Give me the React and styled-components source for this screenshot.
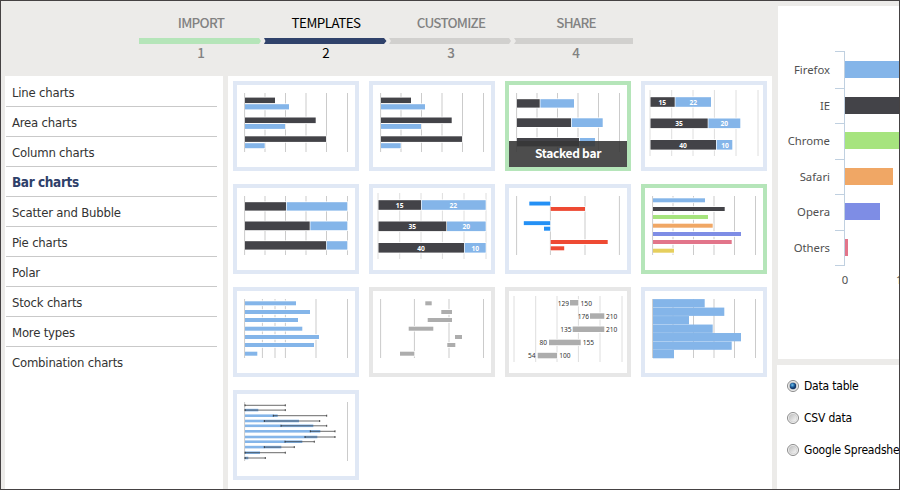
import React from "react";
import styled, { createGlobalStyle } from "styled-components";

const GlobalStyle = createGlobalStyle`
  * { box-sizing: border-box; }
  html, body { margin: 0; padding: 0; overflow: hidden; }
  body { background: #ecebe9; }
`;

const DARK = "#434348";
const BLUE = "#84b5e9";
const GRAY = "#adadad";
const AZURE = "#2490f5";
const RED = "#ee4a33";

const Page = styled.div`
  width: 900px;
  height: 490px;
  display: flex;
  border: 1px solid #454243;
  background: #ecebe9;
  overflow: hidden;
  font-family: "DejaVu Sans Condensed", "DejaVu Sans", sans-serif;
`;

const Main = styled.main`
  width: 771px;
  flex: none;
  display: flex;
  flex-direction: column;
`;

const Steps = styled.header`
  height: 75px;
  flex: none;
  display: flex;
  padding: 12px 0 0 138px;
  font-family: "Noto Sans CJK SC", "Noto Sans", sans-serif;
`;

const Step = styled.div`
  width: 125px;
  display: flex;
  flex-direction: column;
  color: ${(p) => (p.$active ? "#000" : "#828282")};
  font-size: 13.4px;
  font-weight: ${(p) => (p.$active ? 400 : 500)};
  line-height: 18px;
`;

const StepLabel = styled.div`
  height: 25px;
  padding-right: 1px;
  text-align: center;
  letter-spacing: ${(p) => (p.$active ? -0.55 : -0.75)}px;
`;

const StepNumber = styled.div`
  padding-right: 1px;
  margin-top: -1px;
  text-align: center;
`;

const StepBar = styled.svg`
  display: block;
  width: 125px;
  height: 6px;
`;

const Columns = styled.div`
  flex: 1;
  display: flex;
  gap: 5px;
  padding-left: 4px;
`;

const Sidebar = styled.nav`
  width: 218px;
  flex: none;
  background: #fff;
  padding: 1px 6px 0 1px;
`;

const Category = styled.div`
  height: 30px;
  padding-left: 6px;
  border-bottom: 1px solid ${(p) => (p.$last ? "transparent" : "#c9c9c9")};
  font-size: ${(p) => (p.$active ? 13.5 : 13)}px;
  line-height: 31px;
  letter-spacing: ${(p) => (p.$active ? -0.4 : -0.2)}px;
  font-weight: ${(p) => (p.$active ? 700 : 400)};
  color: ${(p) => (p.$active ? "#2f4069" : "#333")};
  white-space: nowrap;
`;

const Gallery = styled.section`
  width: 544px;
  flex: none;
  background: #fff;
  display: grid;
  grid-template-columns: repeat(4, 126px);
  grid-auto-rows: 90px;
  gap: 13px 10px;
  padding: 5px;
  align-content: start;
`;

const frames = { blue: "#e0e8f5", green: "#b5e5b9", gray: "#e7e7e7" };

const Card = styled.div`
  position: relative;
  border: 4px solid ${(p) => frames[p.$frame]};
  background: #fff;
`;

const Drawing = styled.svg`
  display: block;
  width: 118px;
  height: 82px;
`;

const Caption = styled.div`
  position: absolute;
  left: 0;
  right: 0;
  bottom: 0;
  height: 26px;
  background: rgba(55, 55, 55, 0.89);
  color: #fff;
  text-align: center;
  font: 700 12px/23px "Noto Sans CJK SC", "Noto Sans", sans-serif;
  letter-spacing: -0.3px;
`;

const Side = styled.aside`
  flex: none;
  width: 127px;
  padding-left: 5px;
  display: flex;
  flex-direction: column;
`;

const ChartPanel = styled.section`
  height: 353px;
  margin: 5px 0 6px 1px;
  background: #fff;
`;

const FormPanel = styled.section`
  flex: 1;
  display: flex;
  flex-direction: column;
  background: #fff;
  padding: 5px 0 0 9px;
`;

const Option = styled.label`
  height: 32px;
  display: flex;
  align-items: center;
  gap: 4px;
  font-size: 12px;
  letter-spacing: -0.2px;
  color: #000;
  white-space: nowrap;
`;

const RadioIcon = styled.svg`
  flex: none;
  width: 14px;
  height: 14px;
`;

const OptionText = styled.span`
  line-height: 20px;
`;

const GRID = [11.6, 32, 52.5, 73, 93.5, 114.5];
const WIDE = [9, 30.7, 52, 73.4, 95, 117];
const stack = (y, h, a, b, x = 12) => [[x, y, a - x, h, DARK], [a + 0.7, y, b - a - 0.7, h, BLUE]];
const ROWS = [14.3, 23, 31, 39.7, 48, 56, 64.7];
const fromAxis = (ends, colors) => ends.map((e, i) => [12, ROWS[i], e - 12, 4, colors[i] || colors[0]]);

const grouped = [
  [12, 16.6, 30, 5.6, DARK], [12, 23.2, 44, 5.2, BLUE],
  [12, 36.5, 70.7, 5.6, DARK], [12, 43, 40, 4.9, BLUE],
  [12, 55.3, 81, 5.6, DARK], [12, 62.2, 19.7, 5, BLUE],
];

const errorBars = [
  [15.3, 12, 12, 52.3], [20.1, 25.3, 12, 52.3], [25.7, 44.7, 40.3, 93.7],
  [31, 66, 31.3, 86.7], [35.8, 80.3, 48, 93.7], [41.3, 87.3, 77.3, 102],
  [47, 84.3, 72, 102], [51.7, 69.3, 52, 81.3], [57.1, 48.3, 31.3, 61.3],
  [62.7, 27, 12, 52.3], [68, 15.3, 12, 32.3],
];

const charts = [
  { frame: "blue", grid: GRID, bars: grouped },
  { frame: "blue", grid: GRID, bars: grouped },
  {
    frame: "green", grid: GRID, caption: "Stacked bar",
    bars: [...stack(18.2, 8.4, 34.7, 69), ...stack(37.3, 8.7, 66, 97.7), ...stack(57, 8.4, 74, 90)],
  },
  {
    frame: "blue", grid: WIDE, tall: true,
    bars: [...stack(16.2, 9.6, 33.7, 70, 9.5), ...stack(37.5, 9.6, 66.7, 99.3, 9.5), ...stack(59, 9.6, 75, 91.3, 9.5)],
    labels: [[21.3, 23.8, 15], [52.3, 23.8, 22], [38, 45, 35], [83.3, 45, 20], [42, 66.7, 40], [84, 66.7, 10]],
  },
  {
    frame: "blue", grid: GRID,
    bars: [...stack(18.2, 8.4, 53, 114.3), ...stack(37.5, 8.7, 76.7, 114.3), ...stack(57.2, 8.4, 93, 114.3)],
  },
  {
    frame: "blue", grid: WIDE, tall: true,
    bars: [...stack(16.2, 9.6, 52, 116.7, 9.5), ...stack(37.5, 9.6, 77.3, 116.7, 9.5), ...stack(59, 9.6, 95, 116.7, 9.5)],
    labels: [[30.7, 23.8, 15], [84.3, 23.8, 22], [43.3, 45, 35], [97.3, 45, 20], [52, 66.7, 40], [106.3, 66.7, 10]],
  },
  {
    frame: "blue", grid: [11.6, 45.4, 80, 114.4],
    bars: [
      [24.3, 17.6, 21, 3.9, AZURE], [45.7, 23, 34.3, 3.9, RED],
      [18.8, 37.2, 26.4, 3.9, AZURE], [39, 42.7, 6.2, 4, AZURE],
      [45.7, 56, 57, 4, RED], [45.7, 62.3, 13.5, 4, RED],
    ],
  },
  {
    frame: "green", grid: GRID,
    bars: fromAxis([64, 83.7, 67, 71.7, 100, 90.7, 33], [BLUE, DARK, "#a6e47e", "#f0a765", "#7e8de5", "#e2758a", "#e6cf5e"]),
  },
  {
    frame: "blue", grid: [11.6, 29.4, 42, 52.4, 83, 114.5],
    bars: fromAxis([63, 77, 65, 69.3, 86, 81, 24.3], [BLUE]),
  },
  {
    frame: "gray", grid: [11.6, 45.4, 80, 114.5],
    bars: [[56.3, 62.7], [72.3, 83], [58.7, 83], [39.7, 64.3], [86, 93], [78.3, 86.3], [31, 45.3]]
      .map(([a, b], i) => [a, ROWS[i], b - a, 4, GRAY]),
  },
  {
    frame: "gray", grid: WIDE, tall: true,
    bars: [[65, 13, 8.3], [85, 26.3, 14.3], [67.7, 39.5, 31.6], [44, 52.7, 31.7], [32.7, 65.8, 19.3]]
      .map(([x, y, w]) => [x, y, w, 5.5, GRAY]),
    notes: [
      [64, 19, 129, "end"], [75.6, 19, 150], [84, 32, 176, "end"], [101, 32, 210],
      [66.5, 45.2, 135, "end"], [101, 45.2, 210], [42, 58.3, 80, "end"], [77.8, 58.3, 155],
      [30.5, 71.3, 54, "end"], [54.2, 71.3, 100],
    ],
  },
  {
    frame: "blue", grid: GRID, solid: true,
    bars: [63.7, 83.3, 48, 71.7, 100, 90.7, 33].map((e, i) => [12, 12.1 + i * 8.48, e - 12, 8.3, BLUE]),
  },
  { frame: "blue", grid: [11.6, 114.5], bars: [], errors: errorBars },
];

function MiniChart({ chart }) {
  const top = chart.tall ? 9 : 12;
  const bottom = chart.tall ? 75 : 71;
  return (
    <Card $frame={chart.frame}>
      <Drawing viewBox="4 4 118 82">
        {chart.grid.map((x) => (
          <line key={x} x1={x} x2={x} y1={top} y2={bottom} stroke={chart.tall ? "#dedede" : "#cbcbcb"} />
        ))}
        {chart.bars.map(([x, y, w, h, fill], i) => (
          <g key={i}>
            {!chart.solid && <rect x={x} y={y - 0.8} width={w + 0.6} height={h + 1.6} fill="#fff" />}
            <rect x={x} y={y} width={w} height={h} fill={fill} />
          </g>
        ))}
        {chart.errors &&
          chart.errors.map(([y, end, from, to]) => (
            <g key={y}>
              <rect x="12" y={y - 1.3} width={end - 12} height="2.6" fill={BLUE} />
              <path d={`M${from} ${y}H${to}`} stroke="#333" strokeWidth="0.85" opacity="0.85" />
              <path d={`M${from} ${y - 1}v2M${to} ${y - 1}v2`} stroke="#222" strokeWidth="0.8" />
            </g>
          ))}
        {chart.labels &&
          chart.labels.map(([x, y, t], i) => (
            <text key={i} x={x} y={y} fill="#fff" textAnchor="middle" fontSize="6.7" fontWeight="700" fontFamily="Noto Sans, sans-serif">{t}</text>
          ))}
        {chart.notes &&
          chart.notes.map(([x, y, t, anchor], i) => (
            <text key={i} x={x} y={y} fill="#333" textAnchor={anchor || "start"} fontSize="6.6" fontFamily="Noto Sans, sans-serif">{t}</text>
          ))}
      </Drawing>
      {chart.caption && <Caption>{chart.caption}</Caption>}
    </Card>
  );
}

const steps = [
  { label: "IMPORT", fill: "#b5e5b9", d: "M0 0H120L122 3L120 6H0Z" },
  { label: "TEMPLATES", fill: "#30426b", d: "M0 0H120L122.500 3L120 6H0L1.500 3Z", active: true },
  { label: "CUSTOMIZE", fill: "#d1d0ce", d: "M0 0H120L122 3L120 6H0L2 3Z" },
  { label: "SHARE", fill: "#d1d0ce", d: "M0 0H119V6H0L2 3Z" },
];

const categories = [
  "Line charts", "Area charts", "Column charts", "Bar charts", "Scatter and Bubble",
  "Pie charts", "Polar", "Stock charts", "More types", "Combination charts",
];

const browsers = [
  ["Firefox", 60, BLUE, 61], ["IE", 60, DARK, 97], ["Chrome", 60, "#a6e47e", 132],
  ["Safari", 48, "#f0a765", 168], ["Opera", 35, "#7e8de5", 203], ["Others", 3, "#e2758a", 239],
];

const PreviewSvg = styled.svg`
  display: block;
  width: 121px;
  height: 353px;
`;

function Preview() {
  return (
    <PreviewSvg viewBox="778 6 121 353">
      {browsers.map(([name, w, fill, y]) => (
        <g key={name}>
          <rect x="845" y={y} width={w} height="17" fill={fill} />
          <text x="830" y={y + 13} textAnchor="end" fontSize="11.3" fill="#505050" fontFamily="Noto Sans, sans-serif">{name}</text>
        </g>
      ))}
      <path d="M844.5 51V266M835 51.500H844M835 88.500H844M835 123.500H844M835 159.500H844M835 194.500H844M835 230.500H844M835 265.500H844" stroke="#c0d0e0" fill="none" />
      <text x="845" y="284" textAnchor="middle" fontSize="11.3" fill="#505050" fontFamily="Noto Sans, sans-serif">0</text>
      <text x="896" y="284" fontSize="11.3" fill="#505050" fontFamily="Noto Sans, sans-serif">10</text>
    </PreviewSvg>
  );
}

function Radio({ checked }) {
  return (
    <RadioIcon viewBox="0 0 14 14">
      <defs>
        <linearGradient id="shade" x1="0" y1="0" x2="1" y2="1">
          <stop offset="0" stopColor="#bdbdbd" />
          <stop offset="1" stopColor="#fafafa" />
        </linearGradient>
        <radialGradient id="dot" cx="0.4" cy="0.35">
          <stop offset="0" stopColor="#72c4ed" />
          <stop offset="0.6" stopColor="#2566a4" />
          <stop offset="1" stopColor="#153969" />
        </radialGradient>
      </defs>
      <circle cx="7" cy="7" r="5.5" fill="#f6f6f6" stroke="#8a8a8a" />
      <circle cx="7" cy="7" r="4" fill="url(#shade)" stroke="#c4c4c4" strokeWidth="0.5" />
      {checked && <circle cx="7" cy="7" r="3.2" fill="url(#dot)" />}
    </RadioIcon>
  );
}

export default function App() {
  return (
    <Page>
      <GlobalStyle />
      <Main>
        <Steps>
          {steps.map((s, i) => (
            <Step key={s.label} $active={s.active}>
              <StepLabel $active={s.active}>{s.label}</StepLabel>
              <StepBar viewBox="0 0 125 6"><path d={s.d} fill={s.fill} /></StepBar>
              <StepNumber>{i + 1}</StepNumber>
            </Step>
          ))}
        </Steps>
        <Columns>
          <Sidebar>
            {categories.map((name, i) => (
              <Category key={name} $active={name === "Bar charts"} $last={i === categories.length - 1}>{name}</Category>
            ))}
          </Sidebar>
          <Gallery>
            {charts.map((c, i) => <MiniChart key={i} chart={c} />)}
          </Gallery>
        </Columns>
      </Main>
      <Side>
        <ChartPanel><Preview /></ChartPanel>
        <FormPanel>
          <Option><Radio checked /><OptionText>Data table</OptionText></Option>
          <Option><Radio /><OptionText>CSV data</OptionText></Option>
          <Option><Radio /><OptionText>Google Spreadsheet</OptionText></Option>
        </FormPanel>
      </Side>
    </Page>
  );
}
